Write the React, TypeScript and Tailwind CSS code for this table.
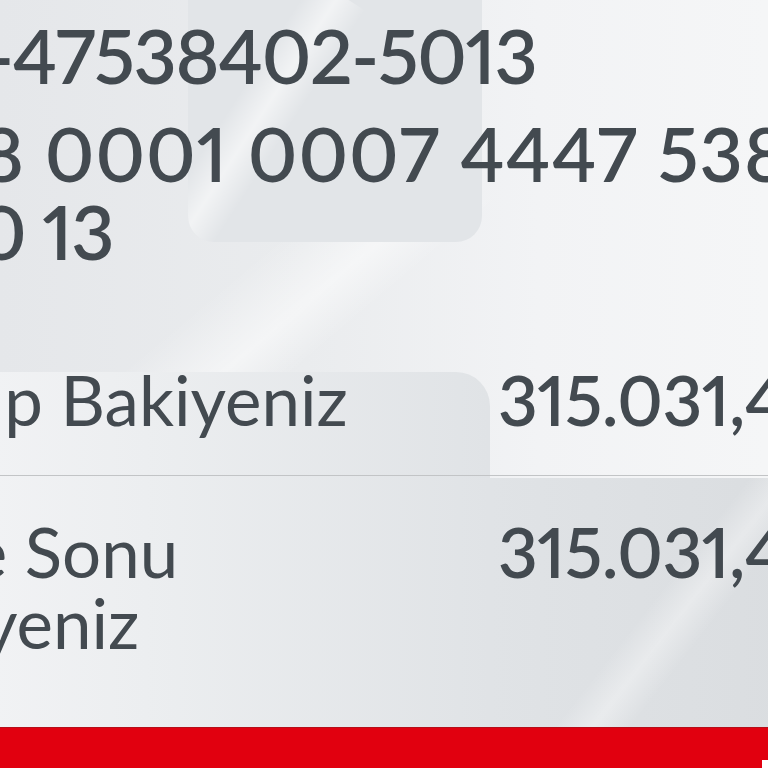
import React from "react";

export default function App() {
  return (
    <div className="relative w-[768px] h-[768px] overflow-hidden bg-[#eef0f2] font-['Lato',sans-serif] text-[#434a50]">
      {/* decorative background */}
      <div className="absolute inset-0 bg-[linear-gradient(90deg,#e5e7ea_0%,#eaecee_40%,#f2f3f5_70%,#f5f6f7_100%)]" />
      <div className="absolute left-0 top-[200px] w-[500px] h-[300px] bg-[linear-gradient(-40deg,rgba(255,255,255,0)_42%,rgba(255,255,255,0.5)_50%,rgba(255,255,255,0)_62%)]" />
      <div className="absolute left-[188px] top-[-60px] w-[294px] h-[302px] rounded-[26px] bg-[#e2e5e8] overflow-hidden">
        <div className="absolute left-[40px] top-[30px] w-[60px] h-[300px] rotate-[33deg] bg-[linear-gradient(90deg,rgba(255,255,255,0)_0%,rgba(255,255,255,0.55)_50%,rgba(255,255,255,0)_100%)]" />
      </div>
      <div className="absolute left-[-40px] top-[372px] w-[530px] h-[360px] rounded-tr-[34px] bg-[linear-gradient(90deg,#f2f3f5_0%,#eceef0_35%,#e0e3e6_100%)]" />
      <div className="absolute left-[490px] top-[478px] w-[300px] h-[260px] bg-[linear-gradient(90deg,#e0e3e6_0%,#dadde0_100%)] overflow-hidden">
        <div className="absolute left-[150px] top-[-40px] w-[60px] h-[380px] rotate-[38deg] bg-[linear-gradient(90deg,rgba(255,255,255,0)_0%,rgba(255,255,255,0.35)_50%,rgba(255,255,255,0)_100%)]" />
      </div>

      <div className="relative flex flex-col h-full">
        <div className="pt-[16px] font-semibold text-[75px] leading-[78px] whitespace-nowrap proportional-nums">
          <div className="ml-[-14px] tracking-[-1.4px]">-47538402-5013</div>
          <div className="mt-[20px] ml-[-20px] tracking-[1px]">8 0001 0007 4447 5384</div>
          <div className="ml-[-23px] tracking-[-1.5px]">0 13</div>
        </div>

        <div className="mt-[54px] flex flex-col text-[69px] leading-[71px] whitespace-nowrap">
          <div className="flex py-[40px] border-b border-[#c2c4c6]">
            <div className="ml-[-148px] w-[646px] shrink-0">Hesap Bakiyeniz</div>
            <div className="font-semibold proportional-nums tracking-[-0.5px]">315.031,42 TL</div>
          </div>
          <div className="flex py-[40px]">
            <div className="ml-[-148px] w-[646px] shrink-0">
              <div>Gece Sonu</div>
              <div>Bakiyeniz</div>
            </div>
            <div className="font-semibold proportional-nums tracking-[-0.5px]">315.031,42 TL</div>
          </div>
        </div>

        <div className="mt-auto h-[41px] bg-[#e1000f] border-t border-[#b50f1a] flex justify-end items-end">
          <div className="w-[6px] h-[8px] bg-white" />
        </div>
      </div>
    </div>
  );
}
